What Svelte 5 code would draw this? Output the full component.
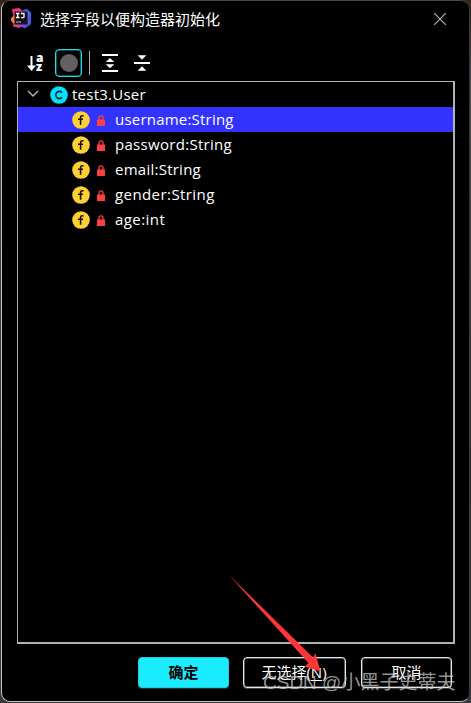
<script>
  const fields = [
    { name: 'username:String', spacing: 0.21 },
    { name: 'password:String', spacing: 0.3 },
    { name: 'email:String', spacing: 0.25 },
    { name: 'gender:String', spacing: 0.42 },
    { name: 'age:int', spacing: 0.43 }
  ];
  let selected = $state(0);
</script>

<div class="desktop">
  <div class="dialog">
    <header>
      <svg class="logo" width="22" height="22" viewBox="0 0 22 22">
        <defs>
          <linearGradient id="pink" x1="0" y1="0" x2="1" y2="1">
            <stop offset="0" stop-color="#ff2c64" />
            <stop offset=".55" stop-color="#e83c92" />
            <stop offset="1" stop-color="#8b45dc" />
          </linearGradient>
          <linearGradient id="blue" x1="0" y1="0" x2="0" y2="1">
            <stop offset="0" stop-color="#3d69ee" />
            <stop offset="1" stop-color="#5650dc" />
          </linearGradient>
        </defs>
        <path d="M13 2l4-1 4 3.500v11.500l-6 4.500-6-3z" fill="url(#blue)" />
        <path d="M2 1l7-1 5 4v13l-5 3-6-1.500 1-6z" fill="url(#pink)" />
        <path d="M1 10l4-3v8l-2 .5L1 12.500z" fill="#ff7a2c" />
        <rect x="4.500" y="3.500" width="13" height="13" fill="#191119" />
        <path d="M6 5.500h3.500M7.750 5.500v4M6 9.500h3.500M11 5.500h3v3.200q0 1-1 1h-2" fill="none" stroke="#fff" stroke-width="1.300" />
        <path d="M6 14h5" stroke="#bbb" />
      </svg>
      <h1>选择字段以便构造器初始化</h1>
      <svg class="close" width="14" height="14" viewBox="0 0 14 14">
        <path d="M1.200 1.200l11.600 11.600M12.800 1.200L1.200 12.800" stroke="#b5b5b5" stroke-width="1.200" />
      </svg>
    </header>

    <div class="toolbar">
      <div class="sort">
        <svg width="10" height="17" viewBox="0 0 10 17">
          <path d="M4.500 1v12" stroke="#fff" stroke-width="2" />
          <path d="M0 10.500h9L4.500 16z" fill="#fff" />
        </svg>
        <span class="letters"><b>a</b><b>z</b></span>
      </div>
      <div class="toggle"><i></i></div>
      <div class="divider"></div>
      <svg class="expand" width="16" height="18" viewBox="0 0 16 18">
        <path d="M0 1h16M0 17h16" stroke="#fff" stroke-width="2" />
        <path d="M8 4l4.300 4H3.700zM8 14.200l4.300-4H3.700z" fill="#fff" />
      </svg>
      <svg class="collapse" width="16" height="18" viewBox="0 0 16 18">
        <path d="M0 9h16" stroke="#fff" stroke-width="2" />
        <path d="M3.700 1.300h8.600L8 5.700zM3.700 16.700h8.600L8 12.300z" fill="#fff" />
      </svg>
    </div>

    <div class="tree">
      <div class="row root">
        <svg class="chevron" width="12" height="8" viewBox="0 0 12 8">
          <path d="M1 1l5 5 5-5" fill="none" stroke="#b2b2b2" stroke-width="1.500" />
        </svg>
        <svg class="badge" width="18" height="18" viewBox="0 0 18 18">
          <circle cx="9" cy="9" r="8.800" fill="#00e5ff" />
          <path d="M12.100 6.600A3.600 3.600 0 1 0 12.100 11.400" fill="none" stroke="#06282d" stroke-width="1.600" />
        </svg>
        <span class="label root-label">test3.User</span>
      </div>
      {#each fields as field, i}
        <!-- svelte-ignore a11y_click_events_have_key_events, a11y_no_static_element_interactions -->
        <div class="row field" class:selected={i === selected} onclick={() => (selected = i)}>
          <svg class="badge" width="18" height="18" viewBox="0 0 18 18">
            <circle cx="9" cy="9" r="8.800" fill="#ffd034" />
            <path d="M11.600 4.900q-3-.8-3 1.500v7.400M6 8.200h5" fill="none" stroke="#171306" stroke-width="1.600" />
          </svg>
          <svg class="lock" width="8" height="11" viewBox="0 0 8 11">
            <path d="M2 5V2.800a2 2 0 0 1 4 0V5" fill="none" stroke="#ff4040" stroke-width="1.300" />
            <path d="M0 4.500h8V11H0z" fill="#ff4040" />
          </svg>
          <span class="label" style:letter-spacing="{field.spacing}px">{field.name}</span>
        </div>
      {/each}
    </div>

    <footer>
      <button class="ok">确定</button>
      <button class="none">无选择(<u>N</u>)</button>
      <button class="cancel">取消</button>
    </footer>
  </div>

  <svg class="arrow" width="96" height="102" viewBox="0 0 96 102">
    <path d="M1 1L85 83.500 87.500 79.500 92.500 97.500 76.500 92.500 80.500 89z" fill="#ff3538" />
  </svg>
  <div class="watermark">CSDN @小黑子史蒂夫</div>
</div>

<style>
  :global(body) { background: #30292a; }
  .desktop {
    position: relative;
    box-sizing: border-box;
    width: 471px;
    height: 703px;
    padding: 0 1px 1px 1px;
    overflow: hidden;
    background: linear-gradient(#38271b, #4b4750 12%, #353239 65%, #39363d);
    font-family: "Open Sans", "Noto Sans CJK SC", sans-serif;
    color: #fff;
  }
  .dialog {
    box-sizing: border-box;
    display: flex;
    flex-direction: column;
    height: 702px;
    border: 1px solid #c4c4c4;
    border-top-color: #51463d;
    border-right-color: #35343a;
    border-radius: 9px;
    background: #000;
  }
  header {
    display: flex;
    align-items: center;
    height: 36px;
    padding: 0 22px 0 8px;
  }
  h1 {
    flex: 1;
    margin: 0 0 0 8px;
    font: 400 15px/20px "Noto Sans CJK SC", sans-serif;
    white-space: nowrap;
  }
  .toolbar {
    display: flex;
    align-items: center;
    height: 28px;
    padding: 12px 0 4px 25px;
  }
  .sort { display: flex; align-items: center; width: 28px; }
  .letters {
    display: flex;
    flex-direction: column;
    margin: 0 0 3px -1px;
    font: 700 12px/9px "Open Sans", sans-serif;
  }
  .letters b { height: 9px; }
  .toggle {
    box-sizing: border-box;
    display: grid;
    place-items: center;
    width: 27px;
    height: 28px;
    border: 1px solid #21ddeb;
    border-radius: 4px;
    box-shadow: inset 0 0 0 .5px #139ca5;
  }
  .toggle i { width: 18px; height: 18px; border-radius: 50%; background: #616161; }
  .divider { width: 1px; height: 24px; margin: 0 12px 0 7px; background: #b2b2b2; }
  .collapse { margin-left: 16px; }
  .tree {
    box-sizing: border-box;
    width: 438px;
    height: 563px;
    margin-left: 15px;
    border: solid #b2b2b2;
    border-width: 1px 2px 2px 1px;
    font-size: 15px;
  }
  .row { display: flex; align-items: center; height: 25px; white-space: nowrap; }
  .label { padding-bottom: 2px; }
  .root-label { letter-spacing: .25px; }
  .root { padding-left: 9px; }
  .root .badge { margin: 0 4px 0 11px; }
  .chevron { margin-bottom: 2px; }
  .field { padding-left: 54px; }
  .lock { margin: 1px 10px 0 7px; }
  .selected { background: #3333ff; }
  footer { display: flex; padding: 13px 0 0 136px; }
  button {
    box-sizing: border-box;
    height: 31px;
    padding: 0;
    border: 1px solid #e8e8e8;
    border-radius: 4px;
    background: #000;
    box-shadow: inset 0 0 0 .5px #aaa, 0 1px 1px #444;
    color: #fff;
    font: 400 15px/27px "Open Sans", "Noto Sans CJK SC", sans-serif;
    white-space: nowrap;
  }
  .ok {
    width: 91px;
    border-color: #1acfe0;
    background: #1aebff;
    box-shadow: 0 1px 1px #333;
    color: #000;
    font-weight: 600;
  }
  .none { width: 103px; margin-left: 14px; padding-right: 1px; }
  .cancel { width: 91px; margin-left: 15px; }
  u { text-underline-offset: 2px; text-decoration-thickness: 1px; }
  .arrow { position: absolute; left: 228px; top: 574px; }
  .watermark {
    position: absolute;
    left: 263px;
    top: 669px;
    font: 400 19px/28px "Liberation Sans", "Noto Sans CJK SC", sans-serif;
    color: rgba(205, 205, 205, .72);
    white-space: nowrap;
  }
</style>
